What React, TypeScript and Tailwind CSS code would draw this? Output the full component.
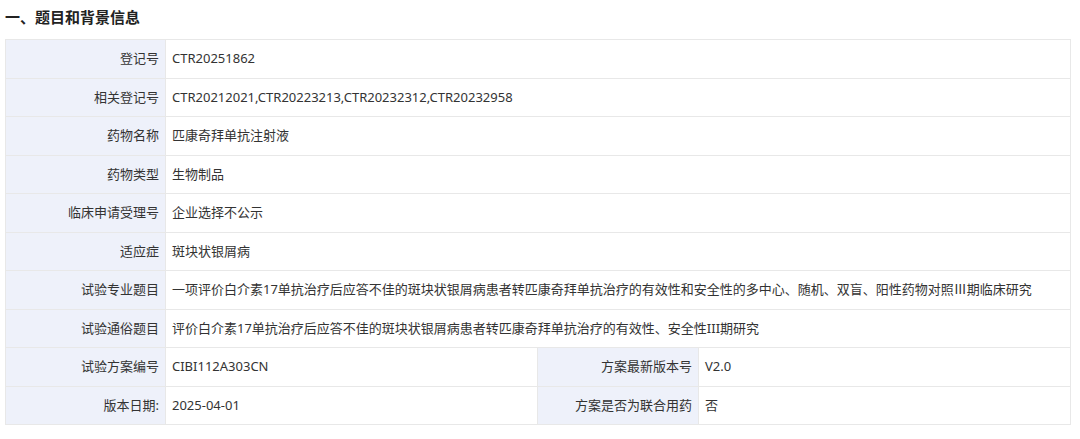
import { FC, ReactNode } from 'react'

const rows: [string, string][] = [
  ['登记号', 'CTR20251862'],
  ['相关登记号', 'CTR20212021,CTR20223213,CTR20232312,CTR20232958'],
  ['药物名称', '匹康奇拜单抗注射液'],
  ['药物类型', '生物制品'],
  ['临床申请受理号', '企业选择不公示'],
  ['适应症', '斑块状银屑病'],
  [
    '试验专业题目',
    '一项评价白介素17单抗治疗后应答不佳的斑块状银屑病患者转匹康奇拜单抗治疗的有效性和安全性的多中心、随机、双盲、阳性药物对照Ⅲ期临床研究',
  ],
  ['试验通俗题目', '评价白介素17单抗治疗后应答不佳的斑块状银屑病患者转匹康奇拜单抗治疗的有效性、安全性III期研究'],
]

const split: [string, string, string, string][] = [
  ['试验方案编号', 'CIBI112A303CN', '方案最新版本号', 'V2.0'],
  ['版本日期:', '2025-04-01', '方案是否为联合用药', '否'],
]

const Label: FC<{ children: ReactNode; w: string }> = ({ children, w }) => (
  <div className={`${w} shrink-0 h-full flex items-center justify-end pr-[6px] bg-[#eef1fa] border-r border-[#e8e8e8]`}>
    {children}
  </div>
)

const App: FC = () => {
  return (
    <div
      className="w-[1080px] h-[439px] bg-white text-[#333] text-[13px] overflow-hidden"
      style={{ fontFamily: '"Noto Sans", "Noto Sans CJK SC", sans-serif' }}
    >
      <h2 className="h-[39px] pl-[5px] pt-[6px] text-[15px] font-bold text-[#222] leading-[22px]">
        一、题目和背景信息
      </h2>
      <div className="ml-[5px] w-[1066px] border border-[#e8e8e8] border-b-0">
        {rows.map(([k, v]) => (
          <div key={k} className="flex items-center h-[38.5px] border-b border-[#e8e8e8]">
            <Label w="w-[160px]">{k}</Label>
            <div className="pl-[6px] whitespace-nowrap">{v}</div>
          </div>
        ))}
        {split.map(([k1, v1, k2, v2]) => (
          <div key={k1} className="flex items-center h-[38.5px] border-b border-[#e8e8e8]">
            <Label w="w-[160px]">{k1}</Label>
            <div className="w-[372px] shrink-0 h-full flex items-center pl-[6px] border-r border-[#e8e8e8]">{v1}</div>
            <Label w="w-[161px]">{k2}</Label>
            <div className="pl-[6px]">{v2}</div>
          </div>
        ))}
      </div>
    </div>
  )
}

export default App
